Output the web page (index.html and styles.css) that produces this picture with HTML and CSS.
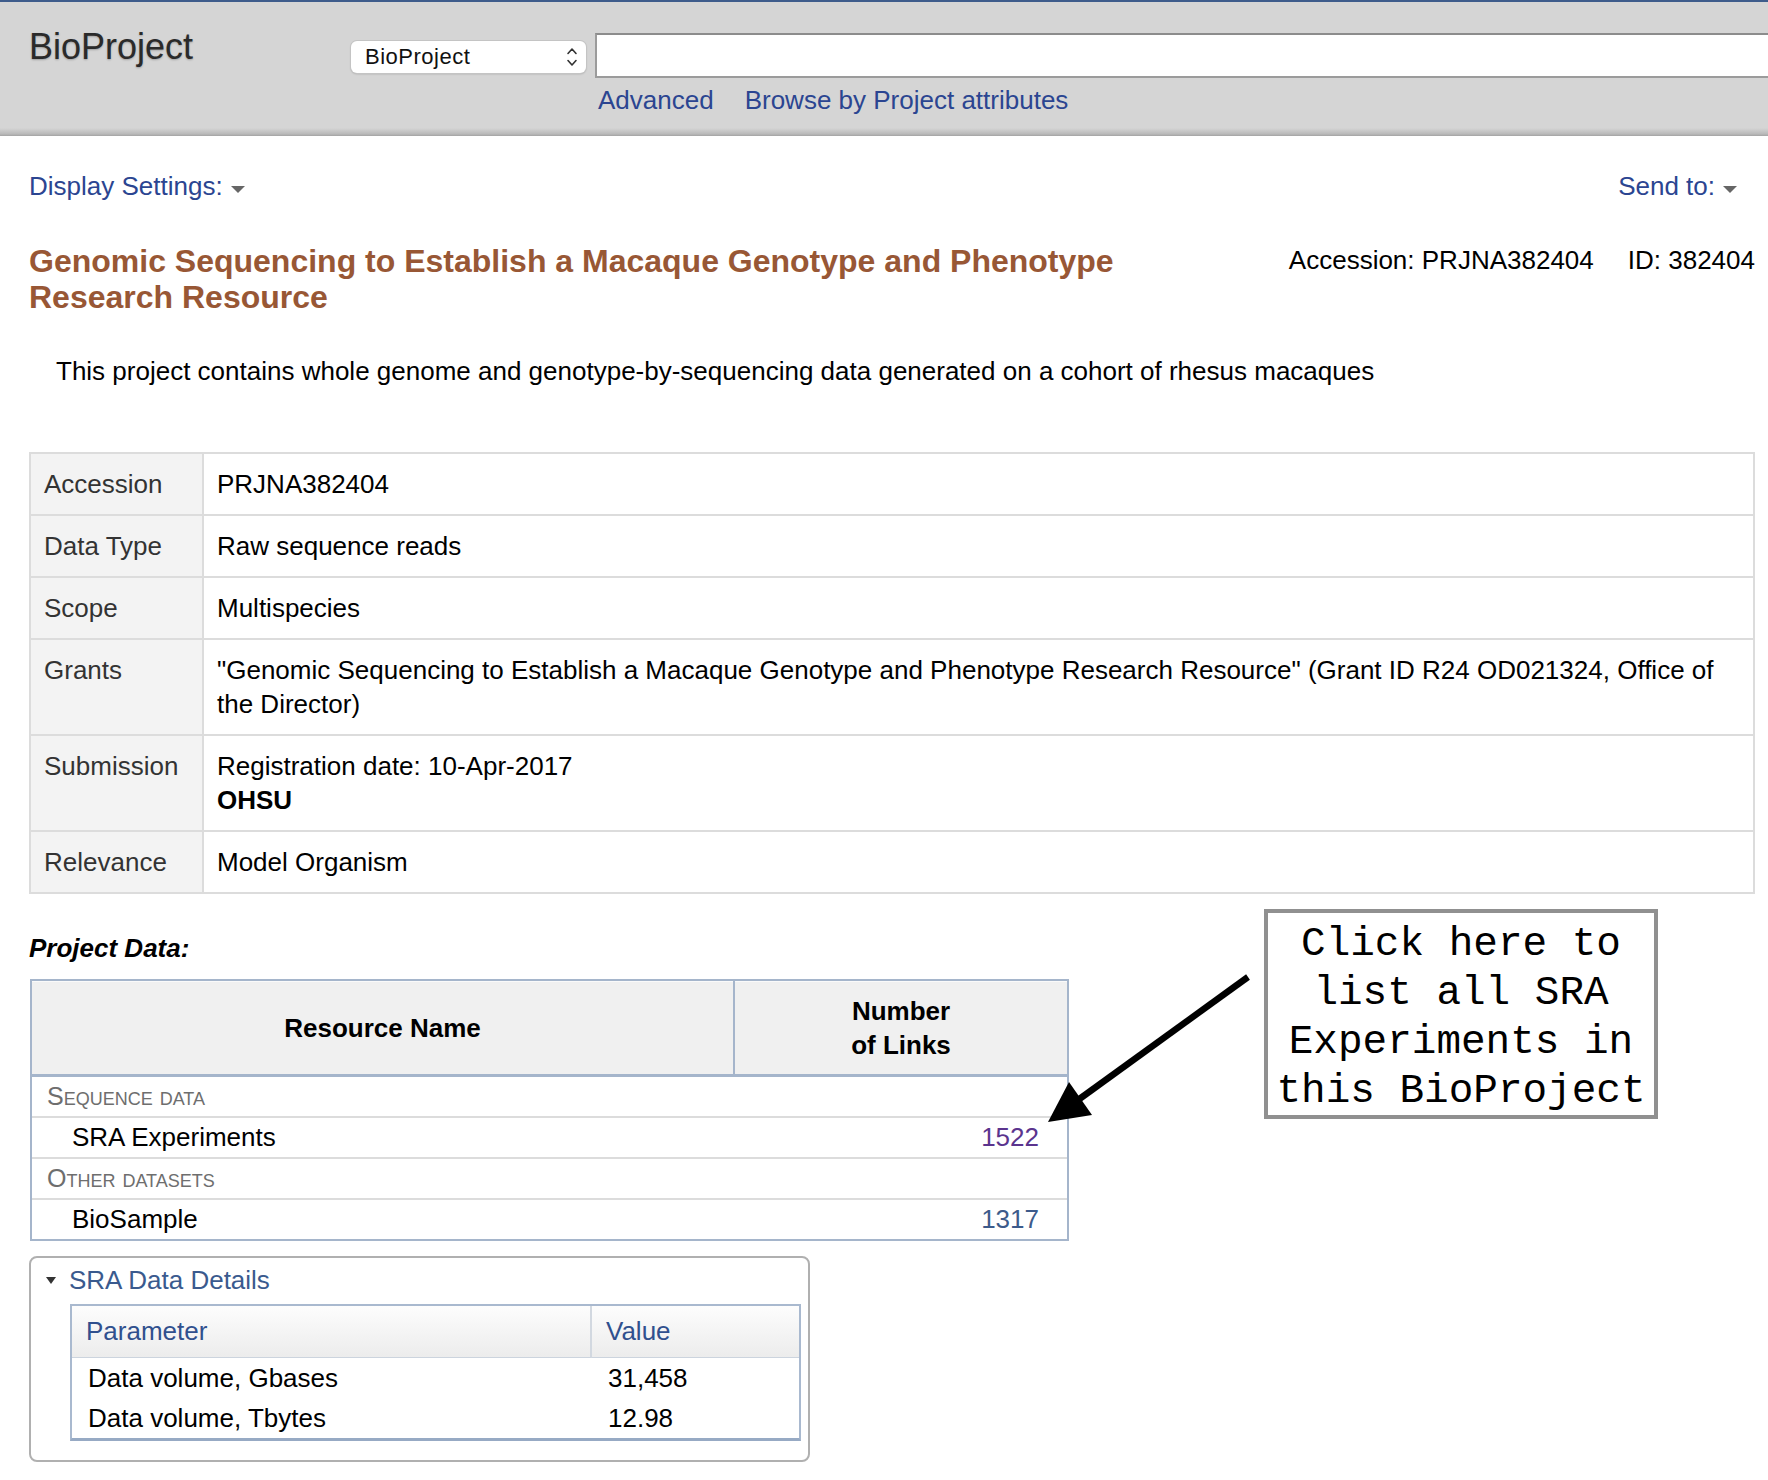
FILE: index.html
```html
<!DOCTYPE html>
<html lang="en">
<head>
<meta charset="utf-8">
<title>BioProject - PRJNA382404</title>
<link rel="stylesheet" href="styles.css">
</head>
<body>
<header class="masthead">
  <div class="logo">BioProject</div>
  <div class="search">
    <div class="search-row">
      <div class="db-select">
        <span>BioProject</span>
        <svg class="updown" width="12" height="22" viewBox="0 0 12 22" aria-hidden="true">
          <path d="M2 7.5 L6 3 L10 7.5" fill="none" stroke="#333" stroke-width="1.6" stroke-linecap="round" stroke-linejoin="round"/>
          <path d="M2 14.5 L6 19 L10 14.5" fill="none" stroke="#333" stroke-width="1.6" stroke-linecap="round" stroke-linejoin="round"/>
        </svg>
      </div>
      <div class="search-input"></div>
    </div>
    <div class="search-links">
      <a href="#">Advanced</a>
      <a href="#">Browse by Project attributes</a>
    </div>
  </div>
</header>

<div class="toolbar">
  <a href="#" class="menu-link">Display Settings:<span class="caret"></span></a>
  <a href="#" class="menu-link">Send to:<span class="caret"></span></a>
</div>

<main class="content">
  <div class="title-row">
    <h1 class="title">Genomic Sequencing to Establish a Macaque Genotype and Phenotype Research Resource</h1>
    <div class="ids"><span>Accession: PRJNA382404</span><span class="id">ID: 382404</span></div>
  </div>

  <p class="desc">This project contains whole genome and genotype-by-sequencing data generated on a cohort of rhesus macaques</p>

  <table class="attr-table">
    <tr><th class="attr-label">Accession</th><td>PRJNA382404</td></tr>
    <tr><th class="attr-label">Data Type</th><td>Raw sequence reads</td></tr>
    <tr><th class="attr-label">Scope</th><td>Multispecies</td></tr>
    <tr><th class="attr-label">Grants</th><td>"Genomic Sequencing to Establish a Macaque Genotype and Phenotype Research Resource" (Grant ID R24 OD021324, Office of the Director)</td></tr>
    <tr><th class="attr-label">Submission</th><td>Registration date: 10-Apr-2017<br><b>OHSU</b></td></tr>
    <tr><th class="attr-label">Relevance</th><td>Model Organism</td></tr>
  </table>

  <h2 class="section-head">Project Data:</h2>

  <table class="pd-table">
    <thead>
      <tr><th class="pd-name-h">Resource Name</th><th class="pd-num-h">Number<br>of Links</th></tr>
    </thead>
    <tbody>
      <tr class="pd-group"><td colspan="2">Sequence data</td></tr>
      <tr class="pd-item"><td class="pd-name">SRA Experiments</td><td class="pd-num"><a href="#" class="visited">1522</a></td></tr>
      <tr class="pd-group"><td colspan="2">Other datasets</td></tr>
      <tr class="pd-item"><td class="pd-name">BioSample</td><td class="pd-num"><a href="#" class="plain">1317</a></td></tr>
    </tbody>
  </table>

  <section class="sra-box">
    <div class="sra-head"><span class="tri"></span><a href="#">SRA Data Details</a></div>
    <table class="sra-table">
      <thead>
        <tr><th class="sra-p">Parameter</th><th class="sra-v">Value</th></tr>
      </thead>
      <tbody>
        <tr><td>Data volume, Gbases</td><td>31,458</td></tr>
        <tr><td>Data volume, Tbytes</td><td>12.98</td></tr>
      </tbody>
    </table>
  </section>
</main>

<svg class="arrow" width="215" height="160" viewBox="0 0 215 160" aria-hidden="true">
  <line x1="208" y1="7" x2="38" y2="130" stroke="#000" stroke-width="6.5"/>
  <polygon points="8,152 52,145 29,112" fill="#000"/>
</svg>
<div class="callout">Click here to list all SRA Experiments in this BioProject</div>
</body>
</html>
```

FILE: styles.css
```css
* { box-sizing: border-box; }

html, body {
  margin: 0;
  padding: 0;
  background: #fff;
  overflow-x: hidden;
}

body {
  font-family: "Liberation Sans", Arial, Helvetica, sans-serif;
  font-size: 26px;
  line-height: 30px;
  color: #000;
  position: relative;
}

a { text-decoration: none; }

/* ---------- masthead ---------- */
.masthead {
  display: flex;
  align-items: flex-start;
  height: 136px;
  padding: 27px 0 0 29px;
  border-top: 2px solid #3e5c8b;
  background: linear-gradient(to bottom, #d5d5d5 0, #d5d5d5 126px, #b9b9b9 132px, #a3a3a3 134px);
  overflow: hidden;
}

.logo {
  width: 322px;
  flex: none;
  font-size: 36px;
  line-height: 36px;
  color: #2a2a2a;
  text-shadow: 0 1px 2px rgba(0,0,0,0.25);
}

.search {
  flex: 1;
  margin-top: 4px;
  min-width: 0;
}

.search-row {
  display: flex;
  align-items: flex-start;
}

.db-select {
  width: 235px;
  height: 32px;
  margin-top: 8px;
  flex: none;
  display: flex;
  align-items: center;
  justify-content: space-between;
  padding: 0 8px 0 14px;
  background: #fff;
  border-radius: 6px;
  box-shadow: 0 0 0 1px #c4c4c4, 0 1px 2px rgba(0,0,0,0.25);
  font-size: 22px;
  letter-spacing: 0.5px;
  color: #111;
}

.updown { display: block; }

.search-input {
  flex: 1;
  height: 45px;
  margin-left: 9px;
  margin-right: -40px;
  background: #fff;
  border: 2px solid #9b9b9b;
  border-top-color: #8c8c8c;
}

.search-links {
  display: flex;
  gap: 31px;
  margin-top: 7px;
  padding-left: 247px;
}

.search-links a { color: #2b4591; }

/* ---------- toolbar ---------- */
.toolbar {
  display: flex;
  justify-content: space-between;
  margin-top: 35px;
  padding: 0 31px 0 29px;
}

.menu-link { color: #2b4591; }

.caret {
  display: inline-block;
  width: 0;
  height: 0;
  margin-left: 8px;
  border-left: 7px solid transparent;
  border-right: 7px solid transparent;
  border-top: 7px solid #666;
  vertical-align: 2px;
}

/* ---------- content ---------- */
.content {
  padding: 0 13px 0 29px;
}

.title-row {
  display: flex;
  align-items: flex-start;
  margin-top: 42px;
}

.title {
  margin: 0;
  max-width: 1150px;
  font-size: 32px;
  line-height: 36px;
  font-weight: bold;
  color: #985735;
}

.ids {
  margin-left: auto;
  margin-top: 2px;
  white-space: nowrap;
}

.ids .id { margin-left: 34px; }

.desc {
  margin: 41px 0 0;
  padding-left: 27px;
}

/* attribute table */
.attr-table {
  width: 100%;
  margin-top: 66px;
  border-collapse: separate;
  border-spacing: 0;
  table-layout: fixed;
  border-top: 2px solid #dcdcdc;
  border-left: 2px solid #dcdcdc;
}

.attr-table th,
.attr-table td {
  padding: 13px 13px;
  line-height: 34px;
  text-align: left;
  vertical-align: top;
  font-weight: normal;
  border-right: 2px solid #dcdcdc;
  border-bottom: 2px solid #dcdcdc;
}

.attr-table .attr-label {
  width: 173px;
  background: #f3f3f3;
  color: #333;
}

.attr-table td b { font-weight: bold; }

.section-head {
  margin: 39px 0 0;
  font-size: 26px;
  line-height: 30px;
  font-weight: bold;
  font-style: italic;
}

/* project data table */
.pd-table {
  width: 1039px;
  margin: 16px 0 0 1px;
  border-collapse: separate;
  border-spacing: 0;
  table-layout: fixed;
  border: 2px solid #a5b5cb;
}

.pd-table th {
  background: #f0f0f0;
  padding: 13px 10px 12px;
  line-height: 34px;
  font-weight: bold;
  text-align: center;
  vertical-align: middle;
  border-bottom: 3px solid #a5b5cb;
  box-shadow: inset 0 1px 0 #fafafa;
}

.pd-table .pd-name-h {
  width: 703px;
  border-right: 2px solid #a5b5cb;
}

.pd-table td {
  padding: 3px 28px 3px 15px;
  line-height: 33px;
}

.pd-table tbody tr + tr td { border-top: 2px solid #dcdcdc; }

.pd-group td {
  font-size: 25px;
  font-variant: small-caps;
  color: #6e6e6e;
}

.pd-item .pd-name { padding-left: 40px; }

.pd-item .pd-num { text-align: right; }

.visited { color: #5b348e; }
.plain { color: #3d5b8b; }

/* SRA box */
.sra-box {
  width: 781px;
  margin-top: 15px;
  padding: 7px 6px 19px 15px;
  border: 2px solid #b0b0b0;
  border-radius: 8px;
}

.sra-head {
  display: flex;
  align-items: center;
}

.sra-head a { color: #3a5a8e; }

.tri {
  width: 0;
  height: 0;
  margin-right: 13px;
  border-left: 5.5px solid transparent;
  border-right: 5.5px solid transparent;
  border-top: 7px solid #333;
}

.sra-table {
  width: 731px;
  margin: 9px 0 0 24px;
  border-collapse: separate;
  border-spacing: 0;
  table-layout: fixed;
  border: 2px solid #a9b9cf;
  border-bottom: 3px solid #97aac4;
}

.sra-table th {
  padding: 8px 14px 9px;
  line-height: 34px;
  font-weight: normal;
  text-align: left;
  color: #30508e;
  background: linear-gradient(to bottom, #fdfdfd, #ececec);
  border-bottom: 1px solid #ccd4de;
}

.sra-table .sra-p {
  width: 520px;
  border-right: 2px solid #d2d8e0;
}

.sra-table td {
  padding: 3px 16px;
  line-height: 34px;
}

/* annotation overlay */
.arrow {
  position: absolute;
  left: 1040px;
  top: 970px;
}

.callout {
  position: absolute;
  left: 1264px;
  top: 909px;
  width: 394px;
  height: 210px;
  padding-top: 7px;
  border: 4px solid #909090;
  background: #fff;
  font-family: "Liberation Mono", "Courier New", monospace;
  font-size: 41px;
  line-height: 49px;
  text-align: center;
  color: #000;
}
```
